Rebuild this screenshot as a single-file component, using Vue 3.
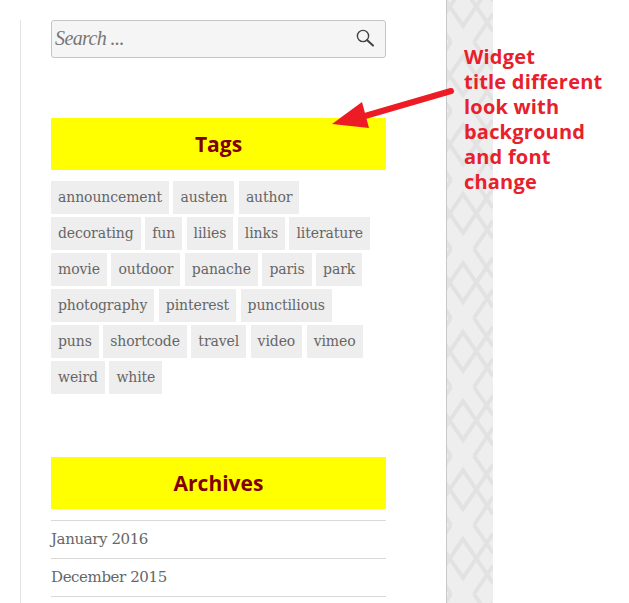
<template>
  <div class="page">
    <aside class="sidebar">
      <div class="sidebar-inner">
        <form class="search" @submit.prevent>
          <span class="search-text">Search ...</span>
          <svg class="search-icon" width="20" height="20" viewBox="0 0 20 20">
            <circle cx="8" cy="8" r="5.6" fill="none" stroke="#444" stroke-width="1.4" />
            <path d="M12 12 L18 17.6" stroke="#444" stroke-width="2" stroke-linecap="round" />
          </svg>
        </form>

        <section class="widget tags-widget">
          <h2 class="widget-title">Tags</h2>
          <div class="tag-list">
            <div v-for="(row, i) in tagRows" :key="i" class="tag-row">
              <a v-for="tag in row" :key="tag" class="tag">{{ tag }}</a>
            </div>
          </div>
        </section>

        <section class="widget archives-widget">
          <h2 class="widget-title">Archives</h2>
          <ul class="archive-list">
            <li v-for="month in months" :key="month">{{ month }}</li>
          </ul>
        </section>
      </div>
    </aside>

    <div class="band">
      <svg width="46" height="603">
        <defs>
          <pattern id="lattice" x="-14" y="42" width="60" height="69" patternUnits="userSpaceOnUse">
            <path d="M0 58 L30 14 L60 58 M0 9 L30 53 L60 9 M41 0 L60 28 M41 69 L60 41 M18 0 L0 28 M18 69 L0 41" fill="none" stroke="#e2e2e2" stroke-width="4" />
          </pattern>
        </defs>
        <rect width="46" height="603" fill="#eeeeee" />
        <rect width="46" height="603" fill="url(#lattice)" />
      </svg>
    </div>

    <div class="note">
      Widget<br />title different<br />look with<br />background<br />and font<br />change
    </div>
    <svg class="arrow" width="130" height="50" viewBox="0 0 130 50">
      <path d="M33 36 L119 11" stroke="#ed1c24" stroke-width="6" stroke-linecap="round" />
      <polygon points="0,44 30,22 37,48" fill="#ed1c24" />
    </svg>
  </div>
</template>

<script setup>
const tagRows = [
  ['announcement', 'austen', 'author'],
  ['decorating', 'fun', 'lilies', 'links', 'literature'],
  ['movie', 'outdoor', 'panache', 'paris', 'park'],
  ['photography', 'pinterest', 'punctilious'],
  ['puns', 'shortcode', 'travel', 'video', 'vimeo'],
  ['weird', 'white']
]
const months = ['January 2016', 'December 2015']
</script>

<style>
html, body {
  margin: 0;
  background: #fff;
  overflow: hidden;
}
</style>

<style scoped>
.page {
  position: relative;
  display: flex;
  width: 629px;
  height: 603px;
  overflow: hidden;
  background: #fff;
  font-family: "DejaVu Serif", "Liberation Serif", serif;
  color: #666;
}
.sidebar {
  box-sizing: border-box;
  width: 447px;
  height: 603px;
  padding: 20px 60px 0 20px;
  border-right: 1px solid #c8c8c8;
}
.sidebar-inner {
  height: 100%;
  padding-left: 30px;
  border-left: 1px solid #e2e2e2;
}
.search {
  box-sizing: border-box;
  display: flex;
  align-items: center;
  justify-content: space-between;
  height: 38px;
  padding: 0 10px 0 3px;
  background: #f5f5f5;
  border: 1px solid #c4c4c4;
  border-radius: 3px;
}
.search-text {
  margin-bottom: 2px;
  font-family: "Liberation Serif", serif;
  font-style: italic;
  font-size: 20px;
  letter-spacing: -0.6px;
  color: #777;
}
.search-icon {
  margin-bottom: 2px;
}
.widget-title {
  margin: 0;
  height: 52px;
  line-height: 52px;
  background: #ffff00;
  color: #800000;
  text-align: center;
  font-family: "Open Sans", sans-serif;
  font-size: 21px;
  font-weight: bold;
}
.tags-widget {
  margin-top: 60px;
}
.tag-list {
  display: flex;
  flex-direction: column;
  gap: 3px;
  margin-top: 11px;
}
.tag-row {
  display: flex;
  gap: 4.5px;
}
.tag {
  box-sizing: border-box;
  height: 33px;
  line-height: 33px;
  padding: 0 7px;
  background: #eeeeee;
  font-size: 14px;
  letter-spacing: -0.1px;
}
.archives-widget {
  margin-top: 63px;
}
.archive-list {
  list-style: none;
  margin: 11px 0 0;
  padding: 0;
  border-top: 1px solid #d9d9d9;
}
.archive-list li {
  height: 37px;
  line-height: 37px;
  border-bottom: 1px solid #d9d9d9;
  font-size: 15px;
  letter-spacing: -0.4px;
}
.band {
  width: 46px;
  height: 603px;
}
.band svg {
  display: block;
}
.note {
  position: absolute;
  left: 464px;
  top: 44px;
  font-family: "Open Sans", "Noto Sans", sans-serif;
  font-size: 20px;
  font-weight: 700;
  letter-spacing: 0.2px;
  line-height: 25px;
  color: #e8202c;
}
.arrow {
  position: absolute;
  left: 332px;
  top: 80px;
}
</style>
